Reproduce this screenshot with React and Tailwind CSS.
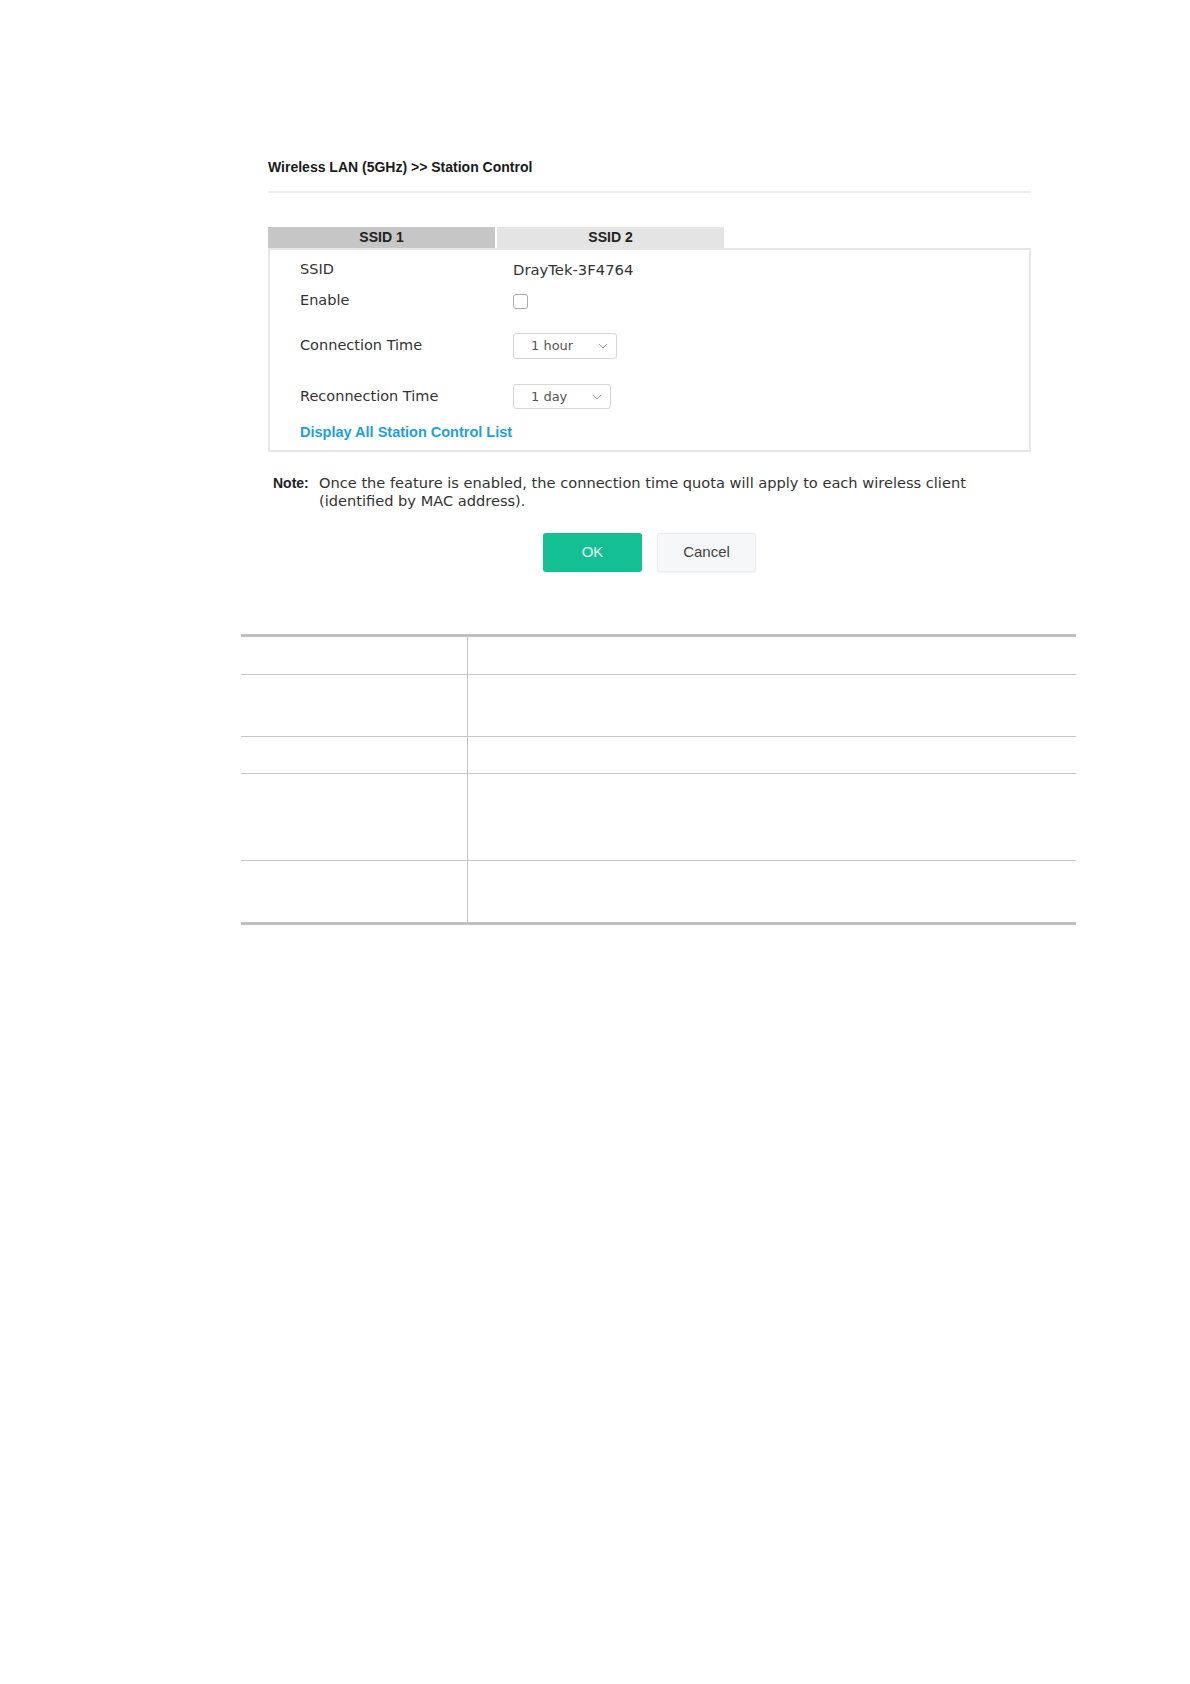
import React from 'react';

const labelFont = { fontFamily: '"DejaVu Sans", Verdana, sans-serif' };
const arialFont = { fontFamily: '"Liberation Sans", Arial, sans-serif' };

function Chevron() {
  return (
    <svg width="10" height="6" viewBox="0 0 10 6" className="block">
      <path d="M1 1 L5 5 L9 1" fill="none" stroke="#9a9a9a" strokeWidth="1" />
    </svg>
  );
}

function SelectBox({ value, width }) {
  return (
    <div className={`flex items-center justify-between h-full border border-[#d6d6d6] rounded-[3px] bg-white pl-[17px] pr-[8px] ${width}`}>
      <span className="text-[13px] text-[#555]" style={labelFont}>{value}</span>
      <Chevron />
    </div>
  );
}

function FormRow({ label, className, children }) {
  return (
    <div className={`flex items-center ${className}`}>
      <div className="w-[243px] pl-[30px] text-[14.5px] text-[#333]" style={labelFont}>
        {label}
      </div>
      <div className="h-full flex items-center">{children}</div>
    </div>
  );
}

const tableRows = ['h-[38px]', 'h-[62px]', 'h-[37px]', 'h-[87px]', 'h-[61px]'];

function App() {
  return (
    <div className="min-h-[1684px] bg-white">
      <div className="ml-[268px] w-[763px] pt-[159px]">
        {/* 标题 */}
        <div className="h-[16px] leading-[16px] text-[14px] font-bold text-[#1a1a1a]" style={arialFont}>
          Wireless LAN (5GHz) &gt;&gt; Station Control
        </div>
        <div className="mt-[16px] h-[2px] bg-[#efefef]" />

        {/* 标签页 */}
        <div className="mt-[34px] flex gap-[2px] h-[21px]" style={arialFont}>
          <div className="w-[227px] bg-[#c6c6c6] flex items-center justify-center text-[14px] font-bold text-[#222]">
            SSID 1
          </div>
          <div className="w-[227px] bg-[#e4e4e4] flex items-center justify-center text-[14px] font-bold text-[#222]">
            SSID 2
          </div>
        </div>

        {/* 设置框 */}
        <div className="border-2 border-[#e6e6e6] pt-[10px] pb-[8px]">
          <FormRow label="SSID" className="h-[20px]">
            <span className="text-[14.8px] text-[#333]" style={labelFont}>DrayTek-3F4764</span>
          </FormRow>
          <FormRow label="Enable" className="h-[20px] mt-[11px]">
            <div className="w-[15px] h-[15px] border border-[#aaaaaa] rounded-[3px] bg-white" />
          </FormRow>
          <FormRow label="Connection Time" className="h-[26px] mt-[22px]">
            <SelectBox value="1 hour" width="w-[104px]" />
          </FormRow>
          <FormRow label="Reconnection Time" className="h-[25px] mt-[25px]">
            <SelectBox value="1 day" width="w-[98px]" />
          </FormRow>
          <div className="h-[18px] mt-[15px] pl-[30px] flex items-center">
            <span className="text-[14.5px] font-bold text-[#1e9fe0]" style={arialFont}>
              Display All Station Control List
            </span>
          </div>
        </div>

        {/* 说明 */}
        <div className="mt-[22px] flex">
          <div className="w-[51px] pl-[5px] text-[14px] leading-[18px] font-bold text-[#222]" style={arialFont}>
            Note:
          </div>
          <div className="text-[14.6px] leading-[18px] text-[#333]" style={labelFont}>
            Once the feature is enabled, the connection time quota will apply to each wireless client
            <br />
            (identified by MAC address).
          </div>
        </div>

        {/* 按钮 */}
        <div className="mt-[23px] flex justify-center gap-[15px]" style={arialFont}>
          <button className="w-[99px] h-[39px] rounded-[3px] bg-[#12c093] text-[15px] text-[#e9fff7]">
            OK
          </button>
          <button className="w-[99px] h-[39px] rounded-[3px] bg-[#f6f7f8] border border-[#ececec] shadow-[0_1px_2px_rgba(0,0,0,0.06)] text-[15px] text-[#444]">
            Cancel
          </button>
        </div>
      </div>

      {/* 空表格 */}
      <div className="ml-[241px] w-[835px] mt-[62px] border-t-[3px] border-b-[3px] border-[#bfbfbf]">
        {tableRows.map((h, i) => (
          <div
            key={i}
            className={`flex ${h} ${i < tableRows.length - 1 ? 'border-b border-[#c6c6c6]' : ''}`}
          >
            <div className="w-[227px] border-r border-[#c6c6c6]" />
            <div className="flex-1" />
          </div>
        ))}
      </div>
    </div>
  );
}

export default App;
